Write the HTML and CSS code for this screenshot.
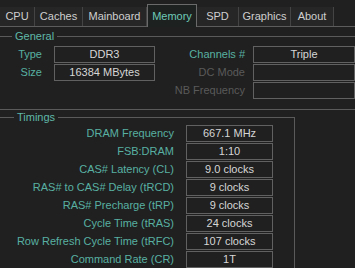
FILE: index.html
```html
<!DOCTYPE html>
<html lang="en">
<head>
  <meta charset="UTF-8">
  <title>CPU-Z Memory</title>
  <link rel="stylesheet" href="styles.css">
</head>
<body>
  <!-- Tab strip -->
  <nav class="tabs">
    <span class="tab w-cpu">CPU</span>
    <span class="tab w-caches">Caches</span>
    <span class="tab w-main">Mainboard</span>
    <span class="tab active w-mem">Memory</span>
    <span class="tab w-spd">SPD</span>
    <span class="tab w-gfx">Graphics</span>
    <span class="tab w-about">About</span>
  </nav>

  <!-- General -->
  <fieldset class="group general">
    <legend>General</legend>
    <div class="grid-general">
      <span class="label">Type</span>
      <span class="value">DDR3</span>
      <span class="label label-right">Channels #</span>
      <span class="value">Triple</span>

      <span class="label">Size</span>
      <span class="value">16384 MBytes</span>
      <span class="label label-right off">DC Mode</span>
      <span class="value"></span>

      <span></span>
      <span></span>
      <span class="label label-right off">NB Frequency</span>
      <span class="value"></span>
    </div>
  </fieldset>

  <!-- Timings -->
  <fieldset class="group timings">
    <legend>Timings</legend>
    <div class="grid-timings">
      <span class="label">DRAM Frequency</span><span class="value">667.1 MHz</span>
      <span class="label">FSB:DRAM</span><span class="value">1:10</span>
      <span class="label">CAS# Latency (CL)</span><span class="value">9.0 clocks</span>
      <span class="label">RAS# to CAS# Delay (tRCD)</span><span class="value">9 clocks</span>
      <span class="label">RAS# Precharge (tRP)</span><span class="value">9 clocks</span>
      <span class="label">Cycle Time (tRAS)</span><span class="value">24 clocks</span>
      <span class="label">Row Refresh Cycle Time (tRFC)</span><span class="value">107 clocks</span>
      <span class="label">Command Rate (CR)</span><span class="value">1T</span>
    </div>
  </fieldset>
</body>
</html>
```

FILE: styles.css
```css
/* Base */
body {
  margin: 0;
  background: #202020;
  color: #d2d2d2;
  font: 11px "Liberation Sans", Arial, sans-serif;
  overflow: hidden;
}

/* Tabs */
.tabs {
  display: flex;
  align-items: flex-end;
  height: 27px;
  border-bottom: 1px solid #5c5c5c;
  box-sizing: border-box;
}

.tab {
  box-sizing: border-box;
  height: 19px;
  line-height: 19px;
  text-align: center;
  background: #262626;
  border-right: 1px solid #444;
  color: #cfcfcf;
}

.tab.active {
  height: 23px;
  line-height: 22px;
  margin-bottom: -1px;
  border: 1px solid #6a6a6a;
  border-bottom: none;
  background: #1d2221;
  color: #6fc9b6;
}

.w-cpu { width: 35px; }
.w-caches { width: 48px; }
.w-main { width: 64px; }
.w-mem { width: 50px; }
.w-spd { width: 42px; }
.w-gfx { width: 52px; }
.w-about { width: 43px; }

/* Group boxes: the left edge sits outside the window */
.group {
  margin: 0;
  border: 1px solid #5a5a5a;
  border-left: none;
  padding: 0;
  min-width: 0;
}

.group legend {
  margin-left: 12px;
  padding: 0 3px;
  color: #5fb8a8;
  line-height: 13px;
}

.general {
  border-right: none;
  margin-top: 3px;
  padding-top: 3px;
  padding-bottom: 10px;
}

.timings {
  width: 295px;
  box-sizing: border-box;
  border-bottom: none;
  margin-top: 1px;
  padding-top: 1px;
}

.timings legend {
  margin-left: 14px;
}

.label {
  text-align: right;
  color: #58b0a2;
  line-height: 17px;
  white-space: nowrap;
}

.label.off {
  color: #5a5a5a;
}

.value {
  box-sizing: border-box;
  height: 17px;
  line-height: 15px;
  border: 1px solid #616161;
  text-align: center;
  color: #d6d6d6;
}

.grid-general {
  display: grid;
  grid-template-columns: 54px 101px 98px 102px;
  grid-auto-rows: 17px;
  row-gap: 1px;
}

.grid-general .label {
  padding-right: 12px;
}

.grid-general .label-right {
  padding-right: 8px;
}

.grid-timings {
  display: grid;
  grid-template-columns: 186px 87px;
  grid-auto-rows: 17px;
  row-gap: 1px;
}

.grid-timings .label {
  padding-right: 12px;
}
```
